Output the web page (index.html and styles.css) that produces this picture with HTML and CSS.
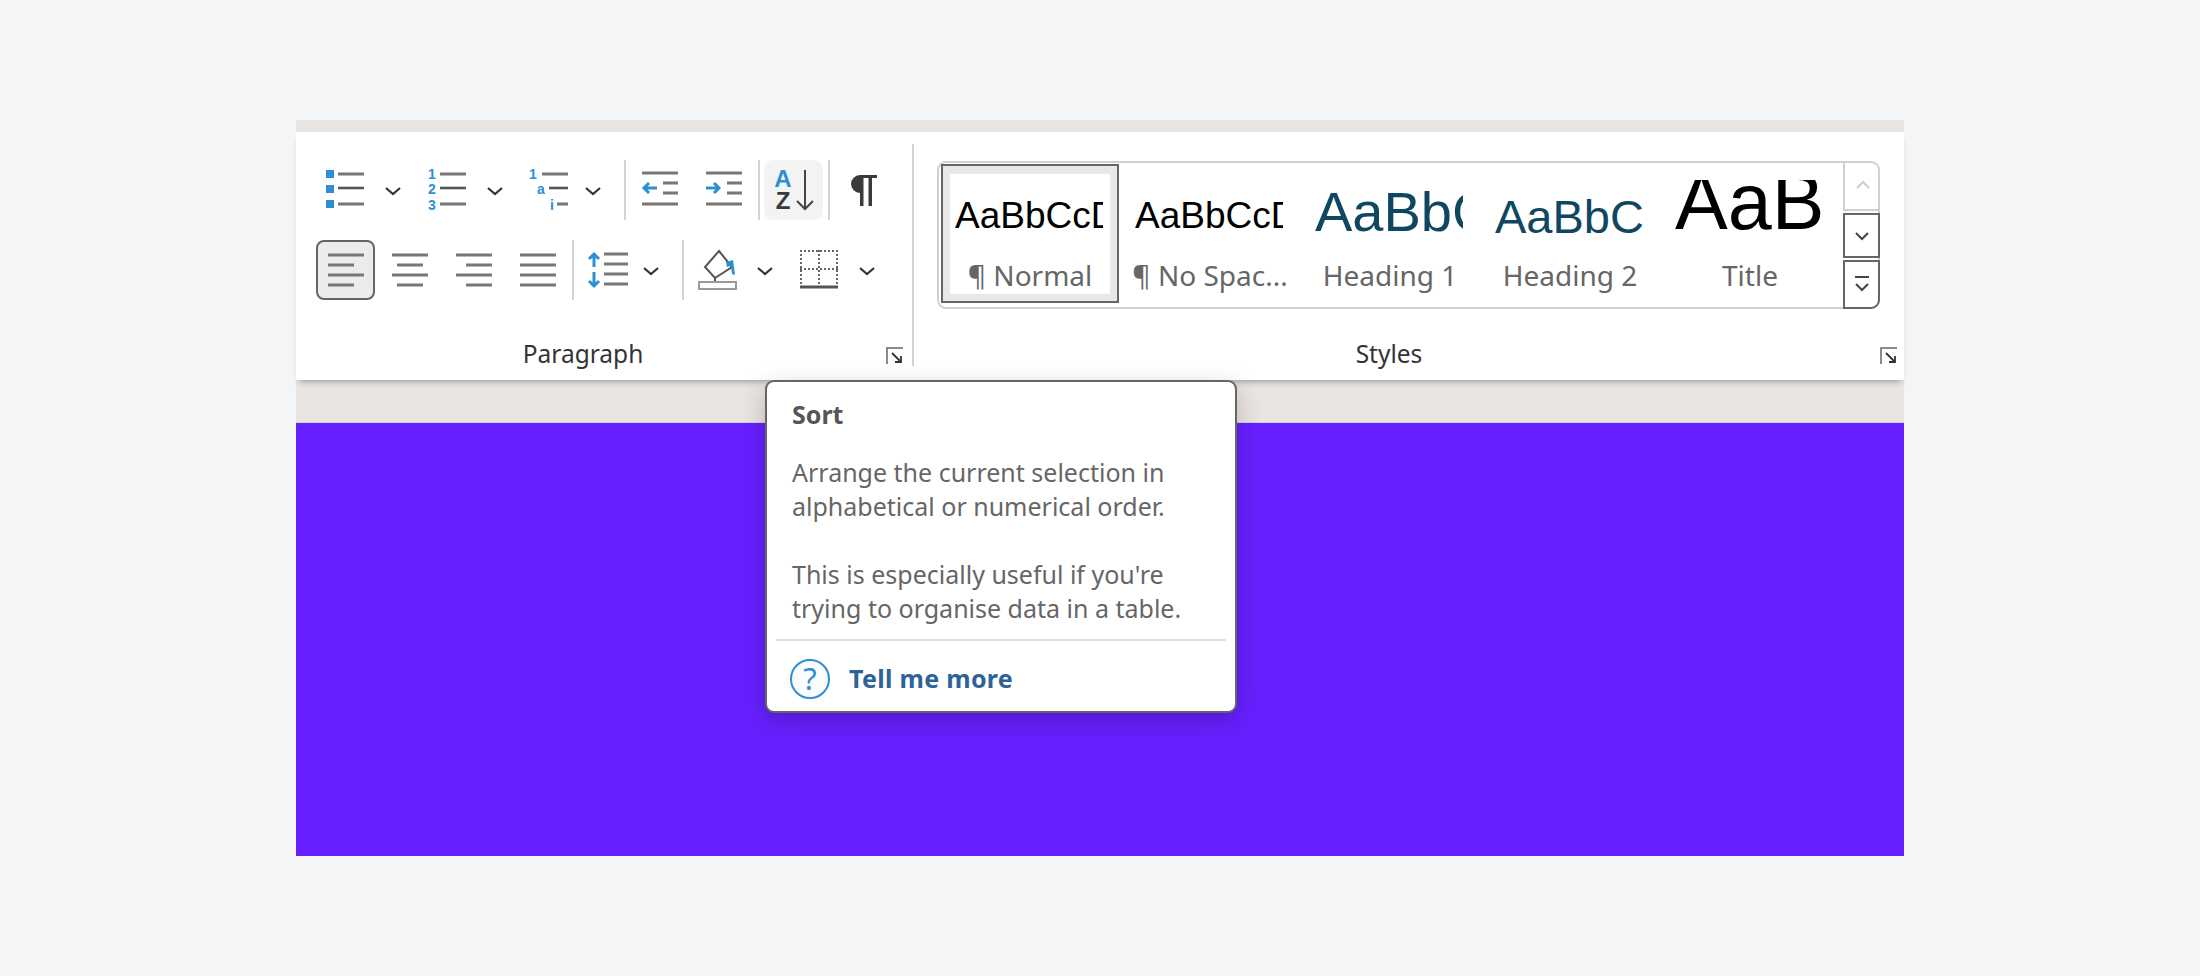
FILE: index.html
```html
<!DOCTYPE html>
<html lang="en">
<head>
  <meta charset="UTF-8" />
  <title>Sort tooltip</title>
  <link rel="stylesheet" href="styles.css">
</head>
<body>
  <div class="frame">
    <div class="topStrip"></div>

    <div class="ribbon">
      <section class="paragraphGroup">
        <div class="toolRow rowOne">
          <svg class="icon w90" viewBox="0 0 90 60">
            <path class="blueFill" d="M6 10h8v8H6zM6 25h8v8H6zM6 40h8v8H6z"/>
            <path class="line" d="M18 14h26M18 44h26"/><path class="lineDark" d="M18 28h26"/>
            <path class="chev" d="M66 28l7 6 7-6"/>
          </svg>
          <svg class="icon w90 gapped" viewBox="0 0 90 60">
            <text class="digit" x="10" y="19">1</text><text class="digit" x="10" y="34">2</text><text class="digit" x="10" y="50">3</text>
            <path class="line" d="M18 14h26M18 44h26"/><path class="lineDark" d="M18 28h26"/>
            <path class="chev" d="M66 28l7 6 7-6"/>
          </svg>
          <svg class="icon w90 gapped" viewBox="0 0 90 60">
            <text class="digit" x="9" y="19">1</text><text class="digit" x="17" y="34">a</text><text class="digit" x="28" y="50">i</text>
            <path class="line" d="M18 14h26M33 44h11"/><path class="lineDark" d="M25 28h19"/>
            <path class="chev" d="M62 28l7 6 7-6"/>
          </svg>
          <span class="sep sepWide"></span>
          <svg class="icon w48" viewBox="0 0 48 60">
            <path class="line" d="M6 13h36M27 23h15M27 33h15M6 44h36"/>
            <path class="blueStroke" d="M21 28H8M13 23l-5 5 5 5"/>
          </svg>
          <svg class="icon w48 gapIndent" viewBox="0 0 48 60">
            <path class="line" d="M6 13h36M27 23h15M27 33h15M6 44h36"/>
            <path class="blueStroke" d="M6 28h13M14 23l5 5-5 5"/>
          </svg>
          <span class="sep sepWide sepBeforeSort"></span>
          <div class="sortBtn">
            <svg class="icon w59" viewBox="0 0 59 60">
              <text class="sortA" x="19" y="27">A</text><text class="sortZ" x="19" y="49">Z</text>
              <path class="arrowDark" d="M41 10v39M33 41l8 8 8-8"/>
            </svg>
          </div>
          <span class="sep sepSort"></span>
          <svg class="icon w56 gapPilcrow" viewBox="0 0 56 60">
            <path class="darkFill" d="M41 15H24a9 9 0 0 0 0 18V46h3.5V18h5V46h3.5V18h5z"/>
          </svg>
        </div>

        <div class="toolRow rowTwo">
          <div class="alignBtn alignActive">
            <svg class="alignIcon" viewBox="0 0 36 34"><path class="line" d="M0 2h36M0 12h26M0 22h36M0 32h26"/></svg>
          </div>
          <div class="alignBtn">
            <svg class="alignIcon" viewBox="0 0 36 34"><path class="line" d="M0 2h36M5 12h26M0 22h36M5 32h26"/></svg>
          </div>
          <div class="alignBtn">
            <svg class="alignIcon" viewBox="0 0 36 34"><path class="line" d="M0 2h36M10 12h26M0 22h36M10 32h26"/></svg>
          </div>
          <div class="alignBtn">
            <svg class="alignIcon" viewBox="0 0 36 34"><path class="line" d="M0 2h36M0 12h36M0 22h36M0 32h36"/></svg>
          </div>
          <span class="sep sepAfterAlign"></span>
          <svg class="icon w85 gapSpacing" viewBox="0 0 85 60">
            <path class="blueStroke" d="M14 27V14M9 19l5-5 5 5M14 32v14M9 41l5 5 5-5"/>
            <path class="line" d="M24 14h24M24 24h24M24 34h24M24 44h24"/>
            <path class="chev" d="M64 28l7 6 7-6"/>
          </svg>
          <span class="sep sepAfterSpacing"></span>
          <svg class="icon w84 gapFill" viewBox="0 0 84 60">
            <path class="bucket" d="M23 11l13 16-17 11-10-11zM19 38v4"/>
            <path class="blueFill" d="M30 22l7-2 2 15-3-1-1-8-4 1z"/>
            <rect class="fillBar" x="3" y="42" width="37" height="7"/>
            <path class="chev" d="M62 28l7 6 7-6"/>
          </svg>
          <svg class="icon w88 gapFill" viewBox="0 0 88 60">
            <path class="dots" d="M8 11h38M8 29h38M9 10v38M27 10v38M45 10v38"/>
            <path class="borderBottom" d="M8 47h38"/>
            <path class="chev" d="M68 28l7 6 7-6"/>
          </svg>
        </div>

        <div class="groupFoot paraFoot">
          <div class="groupLabel">Paragraph</div>
          <svg class="launcher" viewBox="0 0 18 18"><path class="launcherBox" d="M1 17V1h16"/><path class="launcherArrow" d="M6 6l9 9M15 9v6H9"/></svg>
        </div>
      </section>

      <span class="groupSep"></span>

      <section class="stylesGroup">
        <div class="gallery">
          <div class="cells">
            <div class="cell cellActive"><div class="cellInner">
              <div class="sample sampleNormal"><span>AaBbCcDd</span></div>
              <div class="styleName">¶ Normal</div>
            </div></div>
            <div class="cell"><div class="cellInner">
              <div class="sample sampleNormal"><span>AaBbCcDd</span></div>
              <div class="styleName">¶ No Spac...</div>
            </div></div>
            <div class="cell"><div class="cellInner">
              <div class="sample sampleH1"><span>AaBbCc</span></div>
              <div class="styleName">Heading 1</div>
            </div></div>
            <div class="cell"><div class="cellInner">
              <div class="sample sampleH2"><span>AaBbC</span></div>
              <div class="styleName">Heading 2</div>
            </div></div>
            <div class="cell"><div class="cellInner">
              <div class="sample sampleTitle"><span>AaB</span></div>
              <div class="styleName">Title</div>
            </div></div>
          </div>
          <div class="scroller">
            <div class="scrollBtn scrollUp"><svg class="scrollIcon" viewBox="0 0 16 14"><path class="chevLight" d="M2 10l6-6 6 6"/></svg></div>
            <div class="scrollBtn scrollDown"><svg class="scrollIcon" viewBox="0 0 16 14"><path class="chevScroll" d="M2 4l6 6 6-6"/></svg></div>
            <div class="scrollBtn scrollMore"><svg class="scrollIcon" viewBox="0 0 16 20"><path class="chevScroll" d="M1 2h14M2 9l6 6 6-6"/></svg></div>
          </div>
        </div>
        <div class="groupFoot stylesFoot">
          <div class="groupLabel">Styles</div>
          <svg class="launcher" viewBox="0 0 18 18"><path class="launcherBox" d="M1 17V1h16"/><path class="launcherArrow" d="M6 6l9 9M15 9v6H9"/></svg>
        </div>
      </section>
    </div>

    <div class="band"></div>
    <div class="canvas"></div>

    <div class="tooltip">
      <div class="tipTitle">Sort</div>
      <p class="tipText">Arrange the current selection in<br>alphabetical or numerical order.</p>
      <p class="tipText tipTextLast">This is especially useful if you're<br>trying to organise data in a table.</p>
      <div class="tipDivider"></div>
      <div class="tipFoot">
        <svg class="helpIcon" viewBox="0 0 40 40">
          <circle class="helpCircle" cx="20" cy="20" r="19"/>
          <text class="helpMark" x="20" y="31">?</text>
        </svg>
        <span class="tipLink">Tell me more</span>
      </div>
    </div>
  </div>
</body>
</html>
```

FILE: styles.css
```css
body {
  margin: 0;
  background: #f3f5f7;
  font-family: "Noto Sans", "Open Sans", sans-serif;
}

.frame {
  position: relative;
  width: 1608px;
  margin: 120px 0 0 296px;
}

.topStrip {
  height: 12px;
  background: #ebe5e2;
}

.ribbon {
  position: relative;
  z-index: 1;
  display: flex;
  height: 248px;
  background: #fff;
  box-shadow: 0 5px 6px -3px rgba(0, 0, 0, 0.3);
}

.band {
  height: 43px;
  background: #ebe5e2;
  border-bottom: 1px solid #d5d0d6;
  box-sizing: border-box;
}

.canvas {
  height: 433px;
  background: #6720ff;
}

/* paragraph group */
.paragraphGroup {
  width: 616px;
  flex: none;
  padding-left: 20px;
  box-sizing: border-box;
}

.toolRow {
  display: flex;
  align-items: center;
  height: 60px;
}

.rowOne {
  margin-top: 28px;
  margin-left: 4px;
}

.rowTwo {
  margin-top: 20px;
}

.icon {
  display: block;
  height: 60px;
  flex: none;
}

.w48 { width: 48px; }
.w56 { width: 56px; }
.w59 { width: 59px; }
.w84 { width: 84px; }
.w85 { width: 85px; }
.w88 { width: 88px; }
.w90 { width: 90px; }

.gapped { margin-left: 12px; }
.gapIndent { margin-left: 16px; }
.gapPilcrow { margin-left: 6px; }
.gapSpacing { margin-left: 6px; }
.gapFill { margin-left: 12px; }

.sep {
  display: block;
  width: 2px;
  height: 60px;
  flex: none;
  background: #d2d2d2;
}

.sepWide { margin: 0 10px; }
.sepBeforeSort { margin-right: 4px; }
.sepSort { margin-left: 5px; }
.sepAfterAlign { margin-left: 4px; }
.sepAfterSpacing { margin-left: 17px; }

.sortBtn {
  width: 59px;
  height: 60px;
  flex: none;
  background: #f3f3f3;
  border-radius: 9px;
}

.alignBtn {
  display: flex;
  align-items: center;
  justify-content: center;
  width: 60px;
  height: 60px;
  margin-left: 4px;
  flex: none;
  box-sizing: border-box;
}

.alignActive {
  width: 59px;
  margin-left: 0;
  margin-right: 1px;
  background: #ececec;
  border: 2px solid #666;
  border-radius: 8px;
}

.alignIcon {
  width: 36px;
  height: 34px;
}

/* svg strokes */
.line, .lineDark, .chev, .blueStroke, .arrowDark, .bucket, .fillBar, .dots, .borderBottom,
.launcherBox, .launcherArrow, .chevLight, .chevScroll {
  fill: none;
}

.line { stroke: #777; stroke-width: 3; }
.lineDark { stroke: #555; stroke-width: 2.6; }
.chev { stroke: #333; stroke-width: 2.2; }
.blueFill { fill: #2b8fd6; }
.blueStroke { stroke: #2b8fd6; stroke-width: 3; }
.darkFill { fill: #3a3a3a; }
.arrowDark { stroke: #444; stroke-width: 2; }
.bucket { stroke: #555; stroke-width: 2; }
.fillBar { stroke: #9a9a9a; stroke-width: 2; }
.dots { stroke: #666; stroke-width: 2; stroke-dasharray: 2 2; }
.borderBottom { stroke: #555; stroke-width: 3; }
.launcherBox { stroke: #666; stroke-width: 1.5; }
.launcherArrow { stroke: #333; stroke-width: 1.8; }
.chevLight { stroke: #ccc; stroke-width: 2; }
.chevScroll { stroke: #444; stroke-width: 2; }

.digit {
  fill: #2b8fd6;
  font: bold 14px "Liberation Sans", sans-serif;
  text-anchor: middle;
}

.sortA, .sortZ {
  font: bold 24px "Liberation Sans", sans-serif;
  text-anchor: middle;
}

.sortA { fill: #2b8fd6; }
.sortZ { fill: #3a3a3a; }

/* group footer */
.groupFoot {
  display: flex;
  align-items: center;
  height: 30px;
}

.paraFoot {
  margin-top: 38px;
  margin-left: -20px;
  padding-right: 8px;
}

.stylesFoot {
  margin-top: 29px;
  padding-right: 6px;
}

.groupLabel {
  flex: 1;
  padding-right: 16px;
  text-align: center;
  font-size: 24.5px;
  color: #333;
}

.launcher {
  width: 18px;
  height: 18px;
  margin-top: 5px;
  flex: none;
}

.groupSep {
  display: block;
  width: 2px;
  height: 222px;
  margin-top: 12px;
  flex: none;
  background: #d2d2d2;
}

/* styles gallery */
.stylesGroup {
  flex: 1;
  min-width: 0;
}

.gallery {
  display: flex;
  width: 943px;
  height: 148px;
  margin: 29px 0 0 23px;
  box-sizing: border-box;
  border: 2px solid #d0d0d0;
  border-radius: 9px;
}

.cells {
  display: flex;
  gap: 2px;
  flex: 1;
  padding: 1px 0 0 2px;
}

.cell {
  width: 178px;
  height: 139px;
  flex: none;
  box-sizing: border-box;
  padding: 8px 7px 7px;
  border: 2px solid transparent;
}

.cellActive {
  background: #e8e8e8;
  border-color: #666;
}

.cellInner {
  display: flex;
  flex-direction: column;
  height: 120px;
  background: #fff;
}

.sample {
  display: flex;
  align-items: flex-end;
  height: 66px;
  box-sizing: border-box;
  margin: 6px 7px 0 5px;
  overflow: hidden;
  white-space: nowrap;
  font-family: "Liberation Sans", sans-serif;
  line-height: 1;
}

.sampleNormal { font-size: 37px; color: #000; padding-bottom: 12px; }
.sampleH1 { font-size: 56px; color: #0f4761; padding-bottom: 6px; }
.sampleH2 { font-size: 47px; color: #0f4761; padding-bottom: 6px; }
.sampleTitle { font-size: 79px; color: #000; padding-bottom: 5px; }

.styleName {
  margin-top: 11px;
  text-align: center;
  white-space: nowrap;
  font-size: 28px;
  line-height: 36px;
  color: #666;
}

.scroller {
  display: flex;
  flex-direction: column;
  gap: 2px;
  width: 37px;
  margin: -2px -2px -2px 0;
  flex: none;
}

.scrollBtn {
  display: flex;
  align-items: center;
  justify-content: center;
  flex: none;
  box-sizing: border-box;
  border: 2px solid #666;
}

.scrollUp {
  height: 50px;
  border: 0;
  border-left: 2px solid #d0d0d0;
  border-bottom: 2px solid #d0d0d0;
}

.scrollDown { height: 45px; }

.scrollMore {
  height: 49px;
  border-bottom-right-radius: 9px;
}

.scrollIcon {
  width: 16px;
  height: 14px;
}

.scrollMore .scrollIcon { height: 20px; }

/* tooltip */
.tooltip {
  position: absolute;
  z-index: 2;
  left: 469px;
  top: 260px;
  width: 472px;
  height: 333px;
  box-sizing: border-box;
  padding: 0 9px;
  background: #fff;
  border: 2px solid #666;
  border-radius: 9px;
  box-shadow: 0 8px 26px rgba(0, 0, 0, 0.22);
}

.tipTitle {
  margin: 16px 0 0 16px;
  font-size: 25px;
  line-height: 32px;
  font-weight: 700;
  color: #555;
}

.tipText {
  margin: 0 0 0 16px;
  font-size: 25px;
  line-height: 34px;
  color: #666;
  white-space: nowrap;
}

.tipTitle + .tipText { margin-top: 25px; }
.tipTextLast { margin-top: 34px; }

.tipDivider {
  height: 2px;
  margin-top: 14px;
  background: #e0e0e0;
}

.tipFoot {
  display: flex;
  align-items: center;
  gap: 19px;
  margin: 18px 0 0 14px;
}

.helpIcon {
  width: 40px;
  height: 40px;
  flex: none;
}

.helpCircle {
  fill: #fcfcfc;
  stroke: #2b8fd6;
  stroke-width: 2;
}

.helpMark {
  fill: #2b8fd6;
  font: 31px "Noto Sans", sans-serif;
  text-anchor: middle;
}

.tipLink {
  padding-bottom: 2px;
  font-size: 25px;
  line-height: 38px;
  letter-spacing: 0.3px;
  font-weight: 700;
  color: #2e6398;
}
```
